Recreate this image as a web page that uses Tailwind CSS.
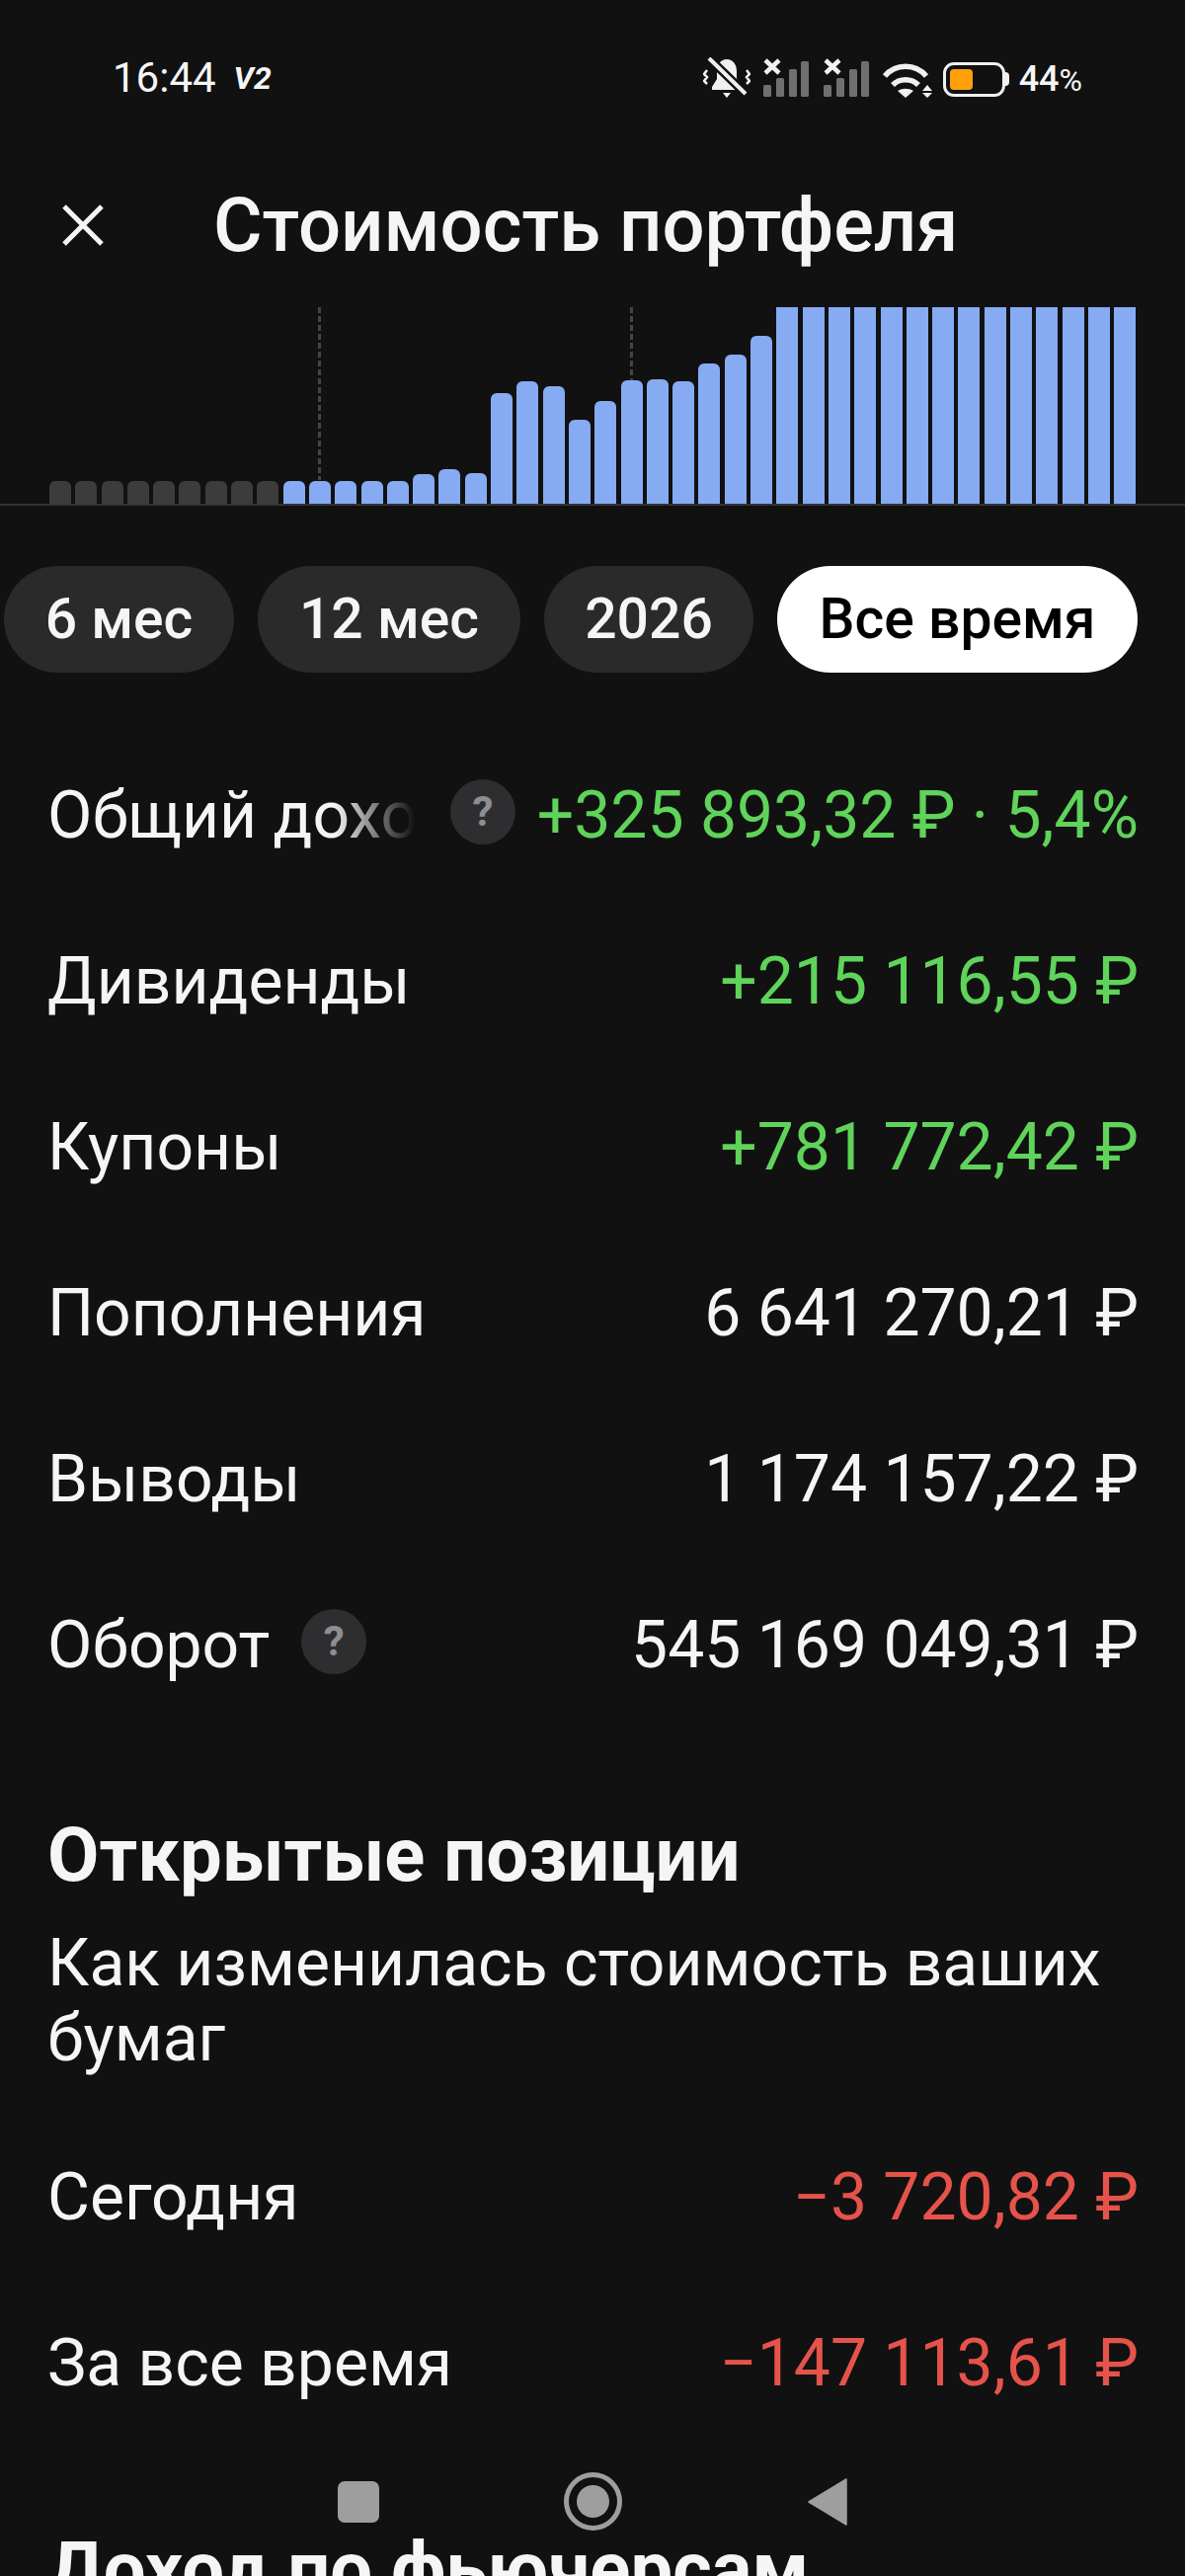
<!DOCTYPE html>
<html lang="ru">
<head>
    <meta charset="UTF-8">
    <meta name="viewport" content="width=device-width, initial-scale=1.0">
    <title>Стоимость портфеля</title>
    <script src="https://cdn.jsdelivr.net/npm/@tailwindcss/browser@4"></script>
</head>
<body class="bg-[#111111]">
<div class="relative w-[1200px] h-[2608px] overflow-hidden bg-[#111111] text-[#f5f5f5] font-['Roboto',sans-serif]">

    <!-- status bar -->
    <div class="flex items-center justify-between h-[42px] mt-[58px] pl-[114px] pr-[104px]">
        <div class="flex items-center gap-[18px]">
            <span class="text-[42px] leading-none">16:44</span>
            <span class="text-[32px] leading-none font-bold italic">V2</span>
        </div>
        <div class="flex items-center">
            <svg class="w-[48px] h-[42px]" viewBox="0 0 48 42" fill="#f0f0f0">
                <path d="M24 2c6 0 10 5 10 12v8l5 8v3H9v-3l5-8v-8C14 7 18 2 24 2z"/>
                <path d="M20 36h8l-4 5z"/>
                <path d="M6 1l37 36" stroke="#111111" stroke-width="9" fill="none"/>
                <path d="M6 1l37 36" stroke="#f0f0f0" stroke-width="4" fill="none"/>
                <path d="M4 13l-3 4 3 3-3 4 3 3M44 13l3 4-3 3 3 4-3 3" stroke="#f0f0f0" stroke-width="2.500" fill="none"/>
            </svg>
            <svg class="w-[46px] h-[42px] ml-[13px]" viewBox="0 0 46 42">
                <path d="M2 3l14 13M16 3L2 16" stroke="#f0f0f0" stroke-width="4.500" fill="none"/>
                <rect x="0" y="28" width="8" height="12" rx="1.500" fill="#6f6f6f"/>
                <rect x="13" y="21" width="8" height="19" rx="1.500" fill="#6f6f6f"/>
                <rect x="26" y="12" width="8" height="28" rx="1.500" fill="#6f6f6f"/>
                <rect x="38" y="4" width="8" height="36" rx="1.500" fill="#6f6f6f"/>
            </svg>
            <svg class="w-[46px] h-[42px] ml-[15px]" viewBox="0 0 46 42">
                <path d="M2 3l14 13M16 3L2 16" stroke="#f0f0f0" stroke-width="4.500" fill="none"/>
                <rect x="0" y="28" width="8" height="12" rx="1.500" fill="#6f6f6f"/>
                <rect x="13" y="21" width="8" height="19" rx="1.500" fill="#6f6f6f"/>
                <rect x="26" y="12" width="8" height="28" rx="1.500" fill="#6f6f6f"/>
                <rect x="38" y="4" width="8" height="36" rx="1.500" fill="#6f6f6f"/>
            </svg>
            <svg class="w-[51px] h-[35px] ml-[13px] mt-[5px]" viewBox="0 0 51 35" fill="none" stroke="#f0f0f0" stroke-width="5.500">
                <path d="M3 13C14 0 34 0 45 13"/>
                <path d="M11 22c7-7 19-7 26 0"/>
                <path d="M16 28c5-3 11-3 16 0l-8 7z" fill="#f0f0f0" stroke="none"/>
                <path d="M46 22l5 6H41zM41 30h10l-5 5z" fill="#f0f0f0" stroke="none"/>
            </svg>
            <div class="flex items-center ml-[11px] mt-[2px]">
                <div class="w-[63px] h-[35px] rounded-[11px] border-[3px] border-[#f0f0f0] p-[4px]">
                    <div class="w-[23px] h-full rounded-[4px] bg-[#ff9f0a]"></div>
                </div>
                <div class="w-[4px] h-[14px] bg-[#f0f0f0] rounded-r-sm"></div>
            </div>
            <span class="ml-[10px] mt-[2px] text-[36px] leading-none font-medium">44<span class="text-[32px] font-normal">%</span></span>
        </div>
    </div>

    <!-- header -->
    <div class="flex items-center mt-[106px] h-[44px] pl-[63px]">
        <svg class="w-[42px] h-[42px]" viewBox="0 0 42 42" stroke="#f5f5f5" stroke-width="5" fill="none">
            <path d="M2 2l38 38M40 2L2 40"/>
        </svg>
        <h1 class="ml-[111px] text-[76px] leading-none font-medium whitespace-nowrap">Стоимость портфеля</h1>
    </div>

    <!-- chart -->
    <div class="relative mt-[61px] h-[201px] border-b-2 border-[#333333]">
        <div id="bars" class="flex items-end h-[199px] pl-[50px] gap-[4.300px]"></div>
        <div class="absolute left-[322px] top-0 w-[3px] h-[175px] bg-[repeating-linear-gradient(to_bottom,#444444_0,#444444_6px,transparent_6px,transparent_9px)]"></div>
        <div class="absolute left-[638px] top-0 w-[3px] h-[74px] bg-[repeating-linear-gradient(to_bottom,#444444_0,#444444_6px,transparent_6px,transparent_9px)]"></div>
    </div>

    <!-- period pills -->
    <div class="flex mt-[61px] pl-[4px] gap-[24px] text-[57px] font-medium">
        <div class="flex items-center justify-center w-[233px] h-[108px] rounded-full bg-[#2a2a2a]">6 мес</div>
        <div class="flex items-center justify-center w-[266px] h-[108px] rounded-full bg-[#2a2a2a]">12 мес</div>
        <div class="flex items-center justify-center w-[212px] h-[108px] rounded-full bg-[#2a2a2a]">2026</div>
        <div class="flex items-center justify-center w-[365px] h-[108px] rounded-full bg-white text-black">Все время</div>
    </div>

    <!-- totals -->
    <div class="mt-[107px] pl-[48px] pr-[47px] text-[66px] leading-[76px] flex flex-col gap-[92px]">
        <div class="flex justify-between items-center">
            <div class="flex items-center">
                <span class="w-[372px] overflow-hidden whitespace-nowrap [mask-image:linear-gradient(to_right,black_78%,transparent)]">Общий доход</span>
                <span class="flex items-center justify-center w-[66px] h-[66px] -mt-[8px] ml-[36px] rounded-full bg-[#2e2e30] text-[#8e8e93] text-[42px] font-bold">?</span>
            </div>
            <span class="text-[#5fd35a]">+325 893,32 ₽ · 5,4%</span>
        </div>
        <div class="flex justify-between"><span>Дивиденды</span><span class="text-[#5fd35a]">+215 116,55 ₽</span></div>
        <div class="flex justify-between"><span>Купоны</span><span class="text-[#5fd35a]">+781 772,42 ₽</span></div>
        <div class="flex justify-between"><span>Пополнения</span><span>6 641 270,21 ₽</span></div>
        <div class="flex justify-between"><span>Выводы</span><span>1 174 157,22 ₽</span></div>
        <div class="flex justify-between items-center">
            <div class="flex items-center">
                <span>Оборот</span>
                <span class="flex items-center justify-center w-[66px] h-[66px] -mt-[8px] ml-[32px] rounded-full bg-[#2e2e30] text-[#8e8e93] text-[42px] font-bold">?</span>
            </div>
            <span>545 169 049,31 ₽</span>
        </div>
    </div>

    <!-- open positions -->
    <div class="mt-[132px] pl-[48px] pr-[47px]">
        <h2 class="text-[76px] leading-[84px] font-bold">Открытые позиции</h2>
        <p class="mt-[30px] text-[66px] leading-[76px]">Как изменилась стоимость ваших бумаг</p>
    </div>
    <div class="mt-[85px] pl-[48px] pr-[47px] text-[66px] leading-[76px] flex flex-col gap-[92px]">
        <div class="flex justify-between"><span>Сегодня</span><span class="text-[#e5534b]">−3 720,82 ₽</span></div>
        <div class="flex justify-between"><span>За все время</span><span class="text-[#e5534b]">−147 113,61 ₽</span></div>
    </div>
    <h2 class="mt-[128px] pl-[48px] text-[76px] leading-[84px] font-bold">Доход по фьючерсам</h2>

    <!-- nav bar -->
    <svg class="absolute left-[342px] top-[2512px] w-[42px] h-[42px]" viewBox="0 0 42 42"><rect width="42" height="42" rx="7" fill="#9e9e9e"/></svg>
    <svg class="absolute left-[571px] top-[2503px] w-[59px] h-[59px]" viewBox="0 0 59 59" fill="none"><circle cx="29.500" cy="29.500" r="27" stroke="#9e9e9e" stroke-width="5"/><circle cx="29.500" cy="29.500" r="16.500" fill="#9e9e9e"/></svg>
    <svg class="absolute left-[818px] top-[2509px] w-[40px] h-[48px]" viewBox="0 0 40 48"><path d="M39 1v46L1 24z" fill="#9e9e9e" stroke="#9e9e9e" stroke-width="1.500" stroke-linejoin="round"/></svg>
</div>

<script>
    // bar heights in px, left to right (first 9 are the grey ones)
    const heights = [23,23,23,23,23,23,23,23,23,23,23,23,23,23,30,35,31,112,124,119,85,104,125,126,124,142,151,170,199,199,199,199,199,199,199,199,199,199,199,199,199,199];
    const bars = document.getElementById('bars');
    heights.forEach((h, i) => {
        const bar = document.createElement('div');
        if (i < 9) bar.className = 'w-[22px] shrink-0 rounded-t-[6px] bg-[#3c3c3c]';
        else if (h < 199) bar.className = 'w-[22px] shrink-0 rounded-t-[6px] bg-[#86abf3]';
        else bar.className = 'w-[22px] shrink-0 bg-[#86abf3]';
        bar.style.height = h + 'px';
        bars.appendChild(bar);
    });
</script>
</body>
</html>
